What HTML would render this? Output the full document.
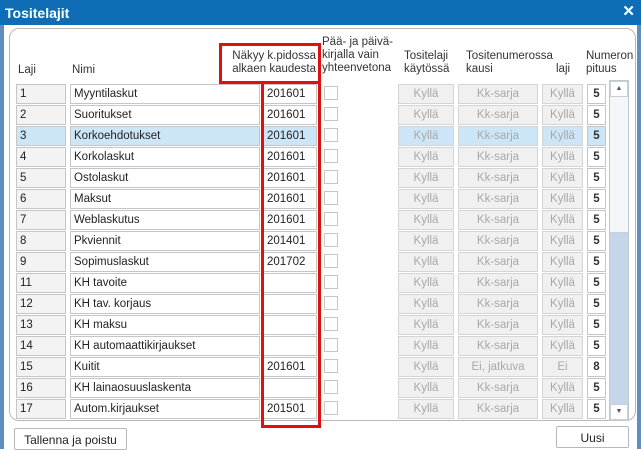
<!DOCTYPE html>
<html><head><meta charset="utf-8"><style>
*{box-sizing:border-box;margin:0;padding:0}
body{width:641px;height:449px;overflow:hidden;background:#fff;font-family:"Liberation Sans",sans-serif;font-size:11.5px;color:#222;position:relative}
.a{position:absolute}
.title{left:0;top:0;width:641px;height:25px;background:#0f6db5;color:#fff;font:bold 14px "Liberation Sans",sans-serif;padding:5px 0 0 5px}
.x{right:6px;top:2px;color:#fff;font-size:15px;font-weight:bold}
.edge{top:25px;width:4px;height:424px;background:#5e8fc0}
.panel{left:9px;top:28px;width:627px;height:393px;border:1px solid #b8b8b8;border-radius:10px;background:#fff}
.h{color:#333;font-size:11.5px;line-height:13px}
.c{position:absolute;height:20px;border:1px solid #c6c6c6;padding:3px 0 0 3px;font-size:11.5px;white-space:nowrap;overflow:hidden}
.l{left:16px;width:50px;background:#f3f3f3}
.n{left:70px;width:190px;background:#fff}
.k{left:263px;width:54px;background:#fff}
.cb{position:absolute;left:324px;width:14px;height:14px;border:1px solid #c6c6c6;background:#fff}
.g{background:#f0f0f0;color:#a8a8a8;text-align:center;padding-left:0;border-color:#d4d4d4}
.g1{left:398px;width:56px}.g2{left:458px;width:80px}.g3{left:542px;width:41px}
.p{left:587px;width:19px;background:#fff;text-align:center;padding-left:0;font-weight:bold;color:#333}
.sel .l,.sel .n,.sel .k,.sel .g,.sel .p{background:#cde6f7}
.red{border:3px solid #e01010}
.btn{height:22px;border:1px solid #b8b8b8;background:#fff;border-radius:2px;font-size:12px;text-align:center;padding-top:4px}
</style></head><body>
<div class="a title">Tositelajit</div>
<div class="a x">✕</div>
<div class="a edge" style="left:0"></div>
<div class="a edge" style="right:0"></div>
<div class="a panel"></div>
<div class="a h" style="left:18px;top:64px">Laji</div>
<div class="a h" style="left:72px;top:64px">Nimi</div>
<div class="a h" style="left:222px;top:50px;text-align:right;width:94px">Näkyy k.pidossa<br>alkaen kaudesta</div>
<div class="a h" style="left:322px;top:36px">Pää- ja päivä-<br>kirjalla vain<br>yhteenvetona</div>
<div class="a h" style="left:404px;top:50px">Tositelaji<br>käytössä</div>
<div class="a h" style="left:466px;top:50px">Tositenumerossa</div>
<div class="a h" style="left:466px;top:63px">kausi</div>
<div class="a h" style="left:556px;top:63px">laji</div>
<div class="a h" style="left:586px;top:50px">Numeron<br>pituus</div>

<div class="a" style="left:0;top:84px">
<div class="a" style="top:0"><div class="c l">1</div><div class="c n">Myyntilaskut</div><div class="c k">201601</div><div class="cb" style="top:2px"></div><div class="c g g1">Kyllä</div><div class="c g g2">Kk-sarja</div><div class="c g g3">Kyllä</div><div class="c p">5</div></div>
<div class="a" style="top:21px"><div class="c l">2</div><div class="c n">Suoritukset</div><div class="c k">201601</div><div class="cb" style="top:2px"></div><div class="c g g1">Kyllä</div><div class="c g g2">Kk-sarja</div><div class="c g g3">Kyllä</div><div class="c p">5</div></div>
<div class="a sel" style="top:42px"><div class="c l">3</div><div class="c n">Korkoehdotukset</div><div class="c k">201601</div><div class="cb" style="top:2px"></div><div class="c g g1">Kyllä</div><div class="c g g2">Kk-sarja</div><div class="c g g3">Kyllä</div><div class="c p">5</div></div>
<div class="a" style="top:63px"><div class="c l">4</div><div class="c n">Korkolaskut</div><div class="c k">201601</div><div class="cb" style="top:2px"></div><div class="c g g1">Kyllä</div><div class="c g g2">Kk-sarja</div><div class="c g g3">Kyllä</div><div class="c p">5</div></div>
<div class="a" style="top:84px"><div class="c l">5</div><div class="c n">Ostolaskut</div><div class="c k">201601</div><div class="cb" style="top:2px"></div><div class="c g g1">Kyllä</div><div class="c g g2">Kk-sarja</div><div class="c g g3">Kyllä</div><div class="c p">5</div></div>
<div class="a" style="top:105px"><div class="c l">6</div><div class="c n">Maksut</div><div class="c k">201601</div><div class="cb" style="top:2px"></div><div class="c g g1">Kyllä</div><div class="c g g2">Kk-sarja</div><div class="c g g3">Kyllä</div><div class="c p">5</div></div>
<div class="a" style="top:126px"><div class="c l">7</div><div class="c n">Weblaskutus</div><div class="c k">201601</div><div class="cb" style="top:2px"></div><div class="c g g1">Kyllä</div><div class="c g g2">Kk-sarja</div><div class="c g g3">Kyllä</div><div class="c p">5</div></div>
<div class="a" style="top:147px"><div class="c l">8</div><div class="c n">Pkviennit</div><div class="c k">201401</div><div class="cb" style="top:2px"></div><div class="c g g1">Kyllä</div><div class="c g g2">Kk-sarja</div><div class="c g g3">Kyllä</div><div class="c p">5</div></div>
<div class="a" style="top:168px"><div class="c l">9</div><div class="c n">Sopimuslaskut</div><div class="c k">201702</div><div class="cb" style="top:2px"></div><div class="c g g1">Kyllä</div><div class="c g g2">Kk-sarja</div><div class="c g g3">Kyllä</div><div class="c p">5</div></div>
<div class="a" style="top:189px"><div class="c l">11</div><div class="c n">KH tavoite</div><div class="c k"></div><div class="cb" style="top:2px"></div><div class="c g g1">Kyllä</div><div class="c g g2">Kk-sarja</div><div class="c g g3">Kyllä</div><div class="c p">5</div></div>
<div class="a" style="top:210px"><div class="c l">12</div><div class="c n">KH tav. korjaus</div><div class="c k"></div><div class="cb" style="top:2px"></div><div class="c g g1">Kyllä</div><div class="c g g2">Kk-sarja</div><div class="c g g3">Kyllä</div><div class="c p">5</div></div>
<div class="a" style="top:231px"><div class="c l">13</div><div class="c n">KH maksu</div><div class="c k"></div><div class="cb" style="top:2px"></div><div class="c g g1">Kyllä</div><div class="c g g2">Kk-sarja</div><div class="c g g3">Kyllä</div><div class="c p">5</div></div>
<div class="a" style="top:252px"><div class="c l">14</div><div class="c n">KH automaattikirjaukset</div><div class="c k"></div><div class="cb" style="top:2px"></div><div class="c g g1">Kyllä</div><div class="c g g2">Kk-sarja</div><div class="c g g3">Kyllä</div><div class="c p">5</div></div>
<div class="a" style="top:273px"><div class="c l">15</div><div class="c n">Kuitit</div><div class="c k">201601</div><div class="cb" style="top:2px"></div><div class="c g g1">Kyllä</div><div class="c g g2">Ei, jatkuva</div><div class="c g g3">Ei</div><div class="c p">8</div></div>
<div class="a" style="top:294px"><div class="c l">16</div><div class="c n">KH lainaosuuslaskenta</div><div class="c k"></div><div class="cb" style="top:2px"></div><div class="c g g1">Kyllä</div><div class="c g g2">Kk-sarja</div><div class="c g g3">Kyllä</div><div class="c p">5</div></div>
<div class="a" style="top:315px"><div class="c l">17</div><div class="c n">Autom.kirjaukset</div><div class="c k">201501</div><div class="cb" style="top:2px"></div><div class="c g g1">Kyllä</div><div class="c g g2">Kk-sarja</div><div class="c g g3">Kyllä</div><div class="c p">5</div></div>
</div>

<div class="a" style="left:609px;top:80px;width:20px;height:341px;background:#c6d6ea;border:1px solid #c0c8d0"></div>
<div class="a" style="left:610px;top:81px;width:18px;height:152px;background:#f4f6f9;border-bottom:1px solid #c8d0d8"></div>
<div class="a" style="left:610px;top:81px;width:18px;height:16px;background:#fff;border:1px solid #c8d0d8;font-size:7px;color:#555;text-align:center;line-height:14px">▲</div>
<div class="a" style="left:610px;top:404px;width:18px;height:16px;background:#fff;border:1px solid #c8d0d8;font-size:7px;color:#555;text-align:center;line-height:14px">▼</div>

<div class="a red" style="left:219px;top:43px;width:102px;height:41px"></div>
<div class="a red" style="left:261px;top:81px;width:60px;height:347px"></div>

<div class="a btn" style="left:14px;top:428px;width:113px">Tallenna ja poistu</div>
<div class="a btn" style="left:556px;top:426px;width:73px">Uusi</div>
</body></html>
